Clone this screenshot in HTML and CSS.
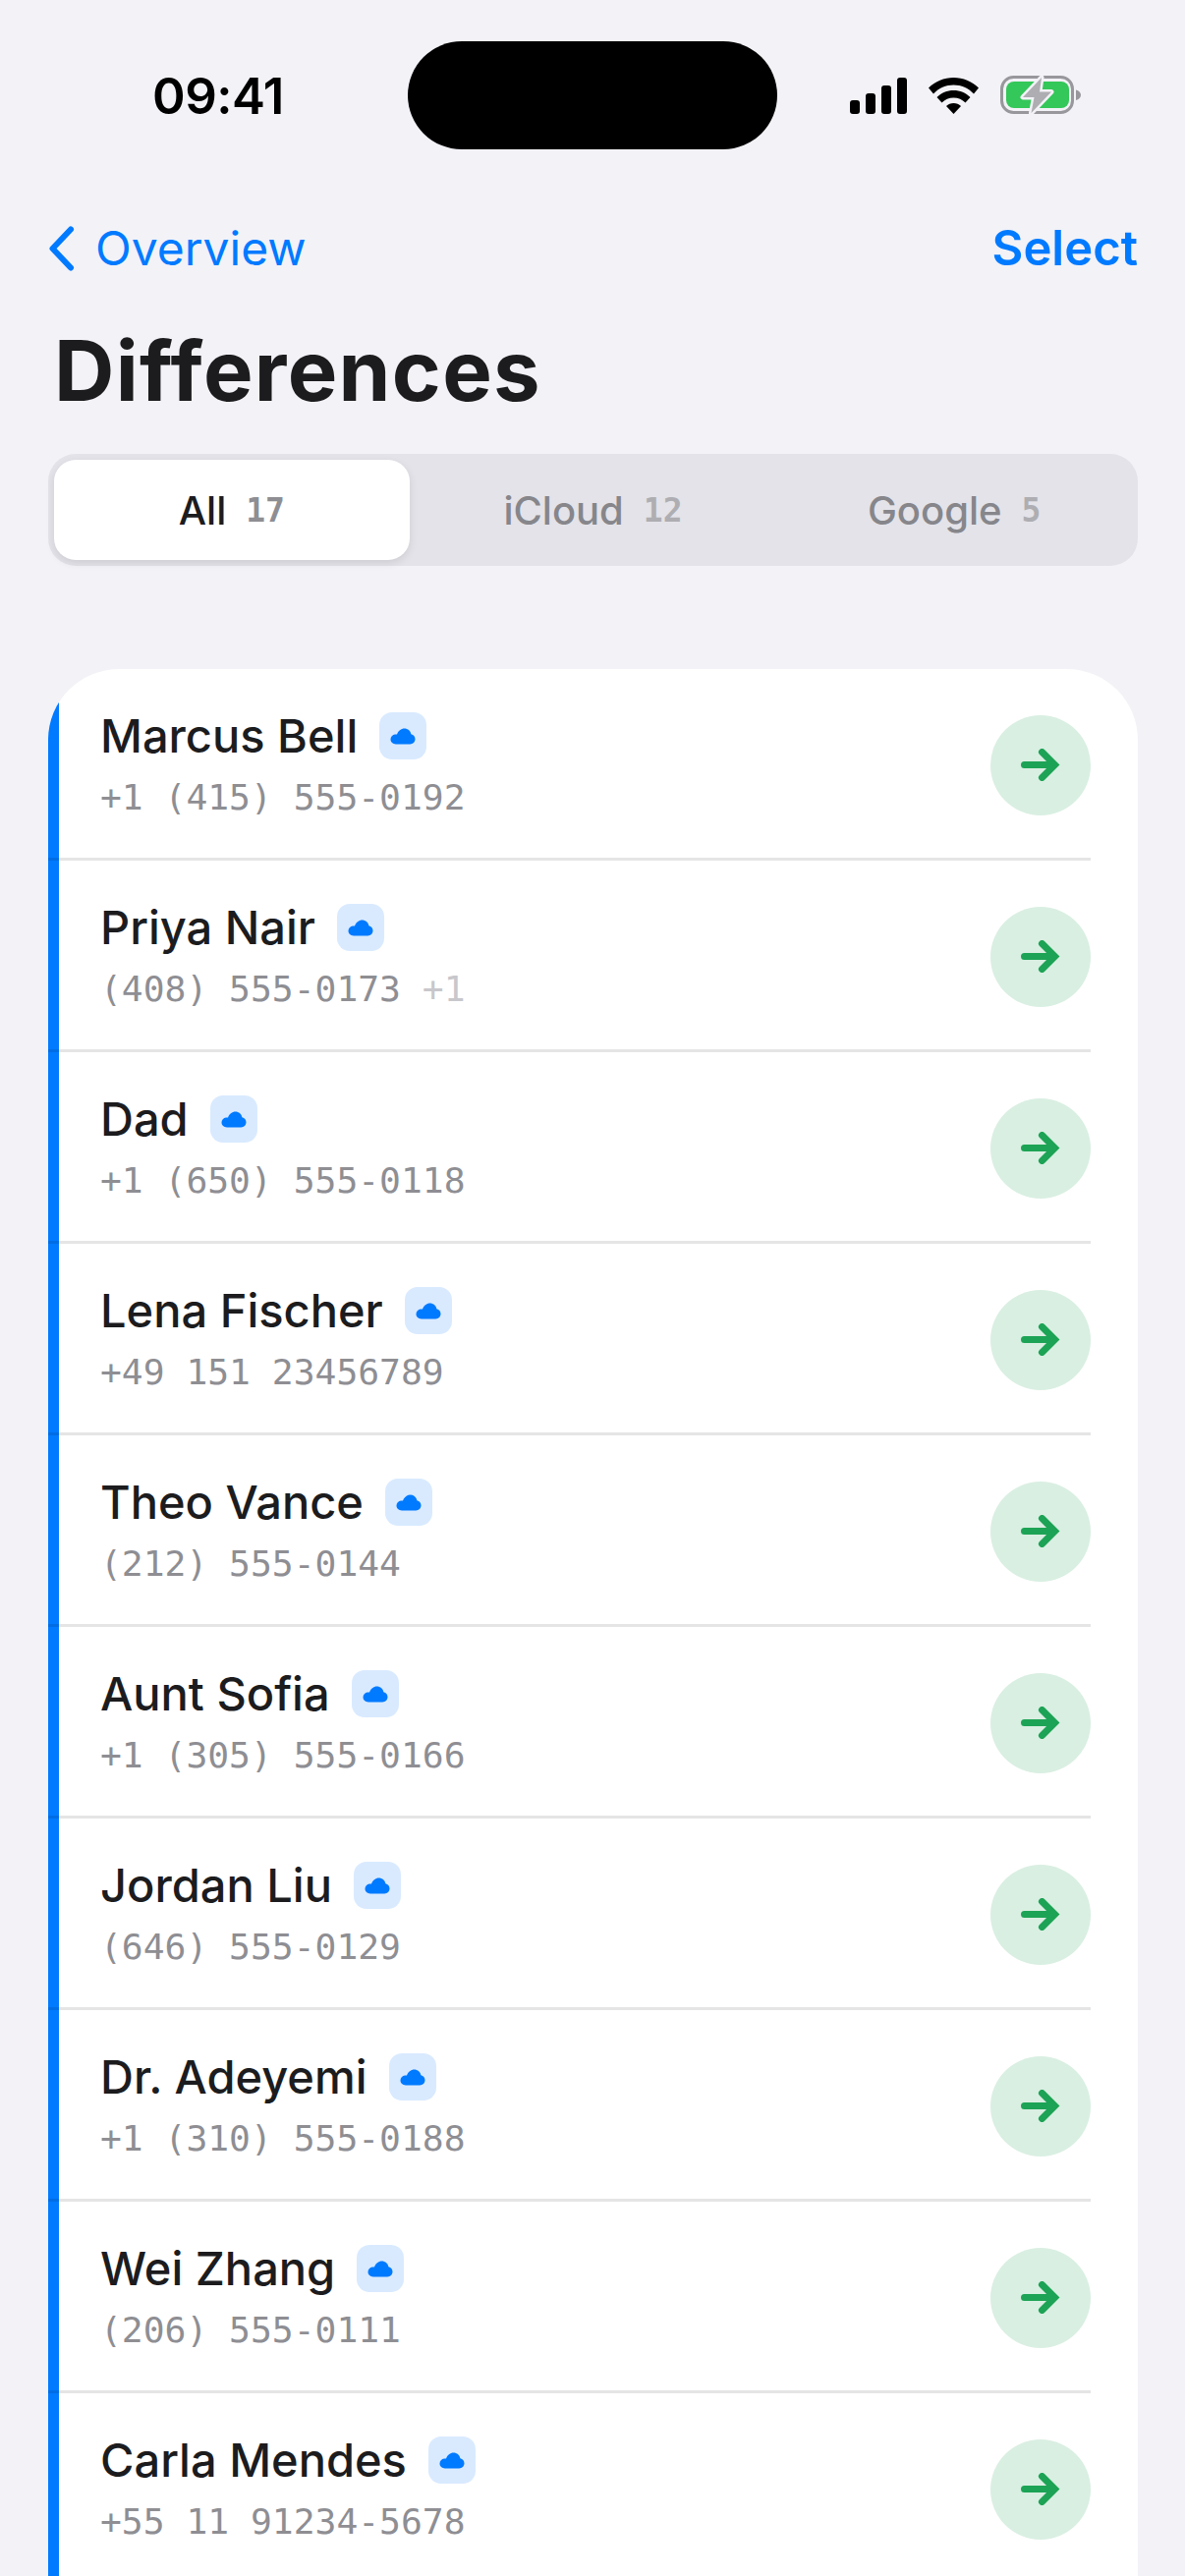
FILE: index.html
```html
<!DOCTYPE html>
<html lang="en">
<head>
  <meta charset="UTF-8" />
  <title>Differences</title>
  <link rel="stylesheet" href="styles.css">
</head>
<body>
  <svg class="defs">
    <symbol id="cloud" viewBox="0 0 26 17">
      <path d="M6 16.500C2.800 16.500.5 14.300.5 11.600c0-2.600 1.900-4.700 4.500-5 .8-.2 1.400-.1 2-.1C8.300 3 11.200.5 14.600.5c3.400 0 6.100 2.300 6.800 5.700 2.400.5 4.100 2.600 4.100 5.100 0 2.900-2.300 5.200-5.200 5.200z"/>
    </symbol>
    <symbol id="arrow" viewBox="0 0 40 33">
      <path d="M3.500 16.500H34M21.500 3.500l13 13-13 13" fill="none" stroke-width="7" stroke-linecap="round" stroke-linejoin="miter"/>
    </symbol>
  </svg>

  <div class="status-bar">
    <span class="time">09:41</span>
    <div class="island"></div>
    <div class="status-icons">
      <svg width="58" height="37" viewBox="0 0 58 37"><rect x="0" y="23" width="10" height="14" rx="3"/><rect x="16" y="16" width="10" height="21" rx="3"/><rect x="32" y="8" width="10" height="29" rx="3"/><rect x="48" y="0" width="10" height="37" rx="3"/></svg>
      <svg width="51" height="37" viewBox="0 0 51 37">
        <path d="M0 10.500C7 3.800 15.800 0 25.500 0S44 3.800 51 10.500L46 16.500C40.500 10.600 33.400 7.500 25.500 7.500S10.500 10.600 5 16.500z"/>
        <path d="M8.500 20C13 15.500 19 13 25.500 13S38 15.500 42.500 20L37.500 25.500C34.500 22.300 30.200 20.400 25.500 20.400S16.500 22.300 13.500 25.500z"/>
        <path d="M18 29C20 27 22.600 26 25.500 26S31 27 33 29L25.500 37z"/>
      </svg>
      <svg width="82" height="40" viewBox="0 0 82 40">
        <rect x="1.500" y="1.500" width="72" height="36" rx="12" fill="none" stroke="#98989c" stroke-width="3"/>
        <rect x="6" y="6" width="64" height="27" rx="8" fill="#34c759"/>
        <path d="M77 14.500c3 .7 5 3 5 5.300s-2 4.600-5 5.300z" fill="#98989c"/>
        <path d="M42 2 23 22H34.500L31.500 38 52 16.500H40z" fill="#aeaeb2" stroke="#f2f2f7" stroke-width="5" stroke-linejoin="round" paint-order="stroke"/>
      </svg>
    </div>
  </div>

  <div class="nav">
    <a class="back">
      <svg width="26" height="46" viewBox="0 0 26 46"><path d="M22 3.500 3.500 23 22 42.500" fill="none" stroke="#007aff" stroke-width="6" stroke-linecap="round" stroke-linejoin="round"/></svg>
      Overview
    </a>
    <a class="select">Select</a>
  </div>

  <h1>Differences</h1>

  <div class="tabs">
    <div class="tab active">All <span class="count">17</span></div>
    <div class="tab">iCloud <span class="count">12</span></div>
    <div class="tab">Google <span class="count">5</span></div>
  </div>

  <div class="list">
    <div class="row">
      <div class="info">
        <div class="name">Marcus Bell <span class="badge"><svg><use href="#cloud"/></svg></span></div>
        <div class="phone">+1 (415) 555-0192</div>
      </div>
      <div class="go"><svg><use href="#arrow"/></svg></div>
    </div>
    <div class="row">
      <div class="info">
        <div class="name">Priya Nair <span class="badge"><svg><use href="#cloud"/></svg></span></div>
        <div class="phone">(408) 555-0173 <span class="extra">+1</span></div>
      </div>
      <div class="go"><svg><use href="#arrow"/></svg></div>
    </div>
    <div class="row">
      <div class="info">
        <div class="name">Dad <span class="badge"><svg><use href="#cloud"/></svg></span></div>
        <div class="phone">+1 (650) 555-0118</div>
      </div>
      <div class="go"><svg><use href="#arrow"/></svg></div>
    </div>
    <div class="row">
      <div class="info">
        <div class="name">Lena Fischer <span class="badge"><svg><use href="#cloud"/></svg></span></div>
        <div class="phone">+49 151 23456789</div>
      </div>
      <div class="go"><svg><use href="#arrow"/></svg></div>
    </div>
    <div class="row">
      <div class="info">
        <div class="name">Theo Vance <span class="badge"><svg><use href="#cloud"/></svg></span></div>
        <div class="phone">(212) 555-0144</div>
      </div>
      <div class="go"><svg><use href="#arrow"/></svg></div>
    </div>
    <div class="row">
      <div class="info">
        <div class="name">Aunt Sofia <span class="badge"><svg><use href="#cloud"/></svg></span></div>
        <div class="phone">+1 (305) 555-0166</div>
      </div>
      <div class="go"><svg><use href="#arrow"/></svg></div>
    </div>
    <div class="row">
      <div class="info">
        <div class="name">Jordan Liu <span class="badge"><svg><use href="#cloud"/></svg></span></div>
        <div class="phone">(646) 555-0129</div>
      </div>
      <div class="go"><svg><use href="#arrow"/></svg></div>
    </div>
    <div class="row">
      <div class="info">
        <div class="name">Dr. Adeyemi <span class="badge"><svg><use href="#cloud"/></svg></span></div>
        <div class="phone">+1 (310) 555-0188</div>
      </div>
      <div class="go"><svg><use href="#arrow"/></svg></div>
    </div>
    <div class="row">
      <div class="info">
        <div class="name">Wei Zhang <span class="badge"><svg><use href="#cloud"/></svg></span></div>
        <div class="phone">(206) 555-0111</div>
      </div>
      <div class="go"><svg><use href="#arrow"/></svg></div>
    </div>
    <div class="row">
      <div class="info">
        <div class="name">Carla Mendes <span class="badge"><svg><use href="#cloud"/></svg></span></div>
        <div class="phone">+55 11 91234-5678</div>
      </div>
      <div class="go"><svg><use href="#arrow"/></svg></div>
    </div>
  </div>
</body>
</html>
```

FILE: styles.css
```css
html, body {
  height: 2622px;
  overflow: hidden;
}
body {
  margin: 0;
  background-color: #f2f2f7;
  font-family: Inter, "Liberation Sans", sans-serif;
  color: #1c1c1e;
}
.defs {
  display: none;
}

/* status bar */
.status-bar {
  display: flex;
  align-items: center;
  height: 110px;
  padding-top: 42px;
}
.time {
  width: 288px;
  padding-left: 155px;
  box-sizing: border-box;
  font-size: 51px;
  font-weight: 600;
  color: #000;
  letter-spacing: -0.5px;
}
.island {
  width: 376px;
  height: 110px;
  margin-left: 127px;
  background: #000;
  border-radius: 55px;
}
.status-icons {
  display: flex;
  align-items: center;
  margin-left: 74px;
  gap: 22px;
}

/* nav */
.nav {
  display: flex;
  justify-content: space-between;
  align-items: center;
  margin-top: 71px;
  padding: 0 48px 0 50px;
}
.back, .select {
  display: flex;
  align-items: center;
  font-size: 48px;
  line-height: 60px;
  color: #007aff;
}
.back svg {
  margin-right: 21px;
}
.select {
  font-size: 49px;
  font-weight: 600;
}

h1 {
  margin: 45px 0 0 55px;
  font-size: 85px;
  line-height: 100px;
  font-weight: 700;
  letter-spacing: 1.3px;
}

/* tabs */
.tabs {
  display: flex;
  gap: 6px;
  margin: 34px 48px 0 49px;
  padding: 6px;
  height: 102px;
  background: #e3e3e9;
  border-radius: 28px;
}
.tab {
  flex: 1;
  display: flex;
  justify-content: center;
  align-items: center;
  gap: 20px;
  font-size: 40px;
  font-weight: 500;
  color: #86868b;
}
.tab.active {
  background: #fff;
  color: #1c1c1e;
  border-radius: 22px;
  box-shadow: 0 3px 8px rgba(0, 0, 0, 0.1);
}
.count {
  font-family: "DejaVu Sans Mono", monospace;
  font-size: 33px;
  font-weight: 600;
  color: #aeaeb2;
}
.tab.active .count {
  color: #8e8e93;
}

/* list */
.list {
  margin: 105px 48px 0 49px;
  background: linear-gradient(#007aff, #007aff) left top / 11px 100% no-repeat, #fff;
  border-radius: 72px 72px 0 0;
  overflow: hidden;
}
.row {
  display: flex;
  align-items: center;
  justify-content: space-between;
  height: 195px;
  box-sizing: border-box;
  margin-right: 48px;
  padding-left: 53px;
  border-bottom: 3px solid rgba(0, 0, 0, 0.1);
}
.name {
  display: flex;
  align-items: center;
  gap: 22px;
  font-size: 47px;
  line-height: 58px;
  font-weight: 550;
}
.badge {
  display: flex;
  justify-content: center;
  align-items: center;
  width: 48px;
  height: 48px;
  background: #d9eaff;
  border-radius: 13px;
}
.badge svg {
  width: 26px;
  height: 17px;
  fill: #007aff;
}
.phone {
  margin-top: 12px;
  font-family: "DejaVu Sans Mono", monospace;
  font-size: 36.3px;
  line-height: 44px;
  color: #8e8e93;
}
.extra {
  color: #c7c7cc;
}
.go {
  display: flex;
  justify-content: center;
  align-items: center;
  width: 102px;
  height: 102px;
  margin-top: 3px;
  background: #d9efe2;
  border-radius: 50%;
}
.go svg {
  width: 40px;
  height: 33px;
  stroke: #1da355;
}
```
